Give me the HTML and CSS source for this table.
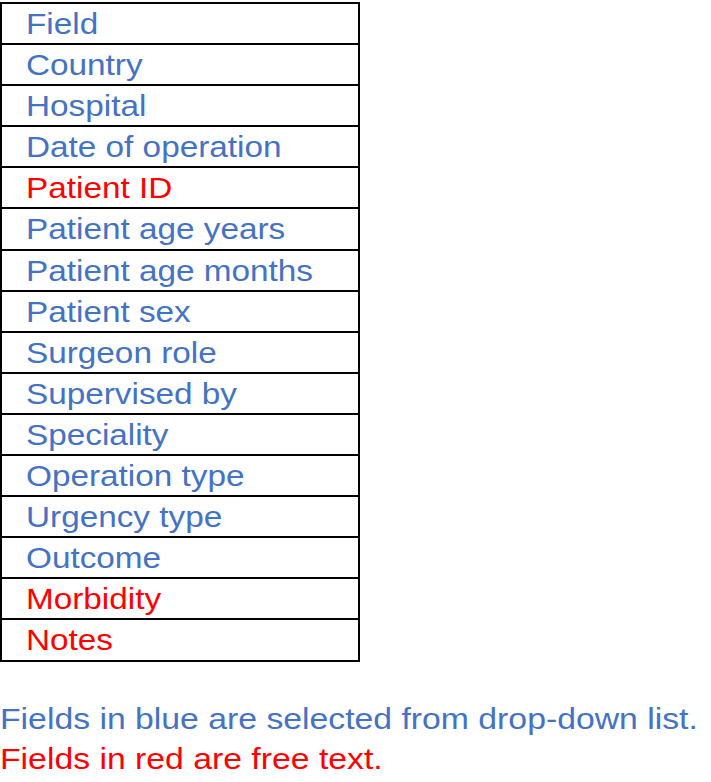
FILE: index.html
```html
<!DOCTYPE html>
<html>
<head>
<meta charset="utf-8">
<link rel="stylesheet" href="styles.css">
</head>
<body>
<table class="fields">
<tr><td class="blue"><span class="wide">Field</span></td></tr>
<tr><td class="blue"><span class="wide">Country</span></td></tr>
<tr><td class="blue"><span class="wide">Hospital</span></td></tr>
<tr><td class="blue"><span class="wide">Date of operation</span></td></tr>
<tr><td class="red"><span class="wide">Patient ID</span></td></tr>
<tr><td class="blue"><span class="wide">Patient age years</span></td></tr>
<tr><td class="blue"><span class="wide">Patient age months</span></td></tr>
<tr><td class="blue"><span class="wide">Patient sex</span></td></tr>
<tr><td class="blue"><span class="wide">Surgeon role</span></td></tr>
<tr><td class="blue"><span class="wide">Supervised by</span></td></tr>
<tr><td class="blue"><span class="wide">Speciality</span></td></tr>
<tr><td class="blue"><span class="wide">Operation type</span></td></tr>
<tr><td class="blue"><span class="wide">Urgency type</span></td></tr>
<tr><td class="blue"><span class="wide">Outcome</span></td></tr>
<tr><td class="red"><span class="wide">Morbidity</span></td></tr>
<tr><td class="red"><span class="wide">Notes</span></td></tr>
</table>
<div class="legend">
<p class="blue"><span class="wider">Fields in blue are selected from drop-down list.</span></p>
<p class="red"><span class="wider">Fields in red are free text.</span></p>
</div>
</body>
</html>
```
FILE: styles.css
```css
html, body {
  margin: 0;
  padding: 0;
  background: #fff;
}
body {
  font-family: "Liberation Sans", Arial, sans-serif;
  font-size: 30px;
}
.fields {
  border-collapse: collapse;
  margin-top: 2px;
  width: 360px;
}
.fields tr {
  height: 41.1px;
}
.fields td {
  border: 2px solid #000;
  padding: 2px 0 0 24px;
  line-height: 35px;
  vertical-align: top;
  white-space: nowrap;
}
.wide {
  display: inline-block;
  transform: scaleX(1.11);
  transform-origin: left center;
}
.wider {
  display: inline-block;
  transform: scaleX(1.125);
  transform-origin: left center;
  white-space: nowrap;
}
.blue { color: #4472c4; }
.red { color: #ff0000; }
.legend {
  margin-top: 37px;
}
.legend p {
  margin: 0;
  line-height: 40px;
}
```
